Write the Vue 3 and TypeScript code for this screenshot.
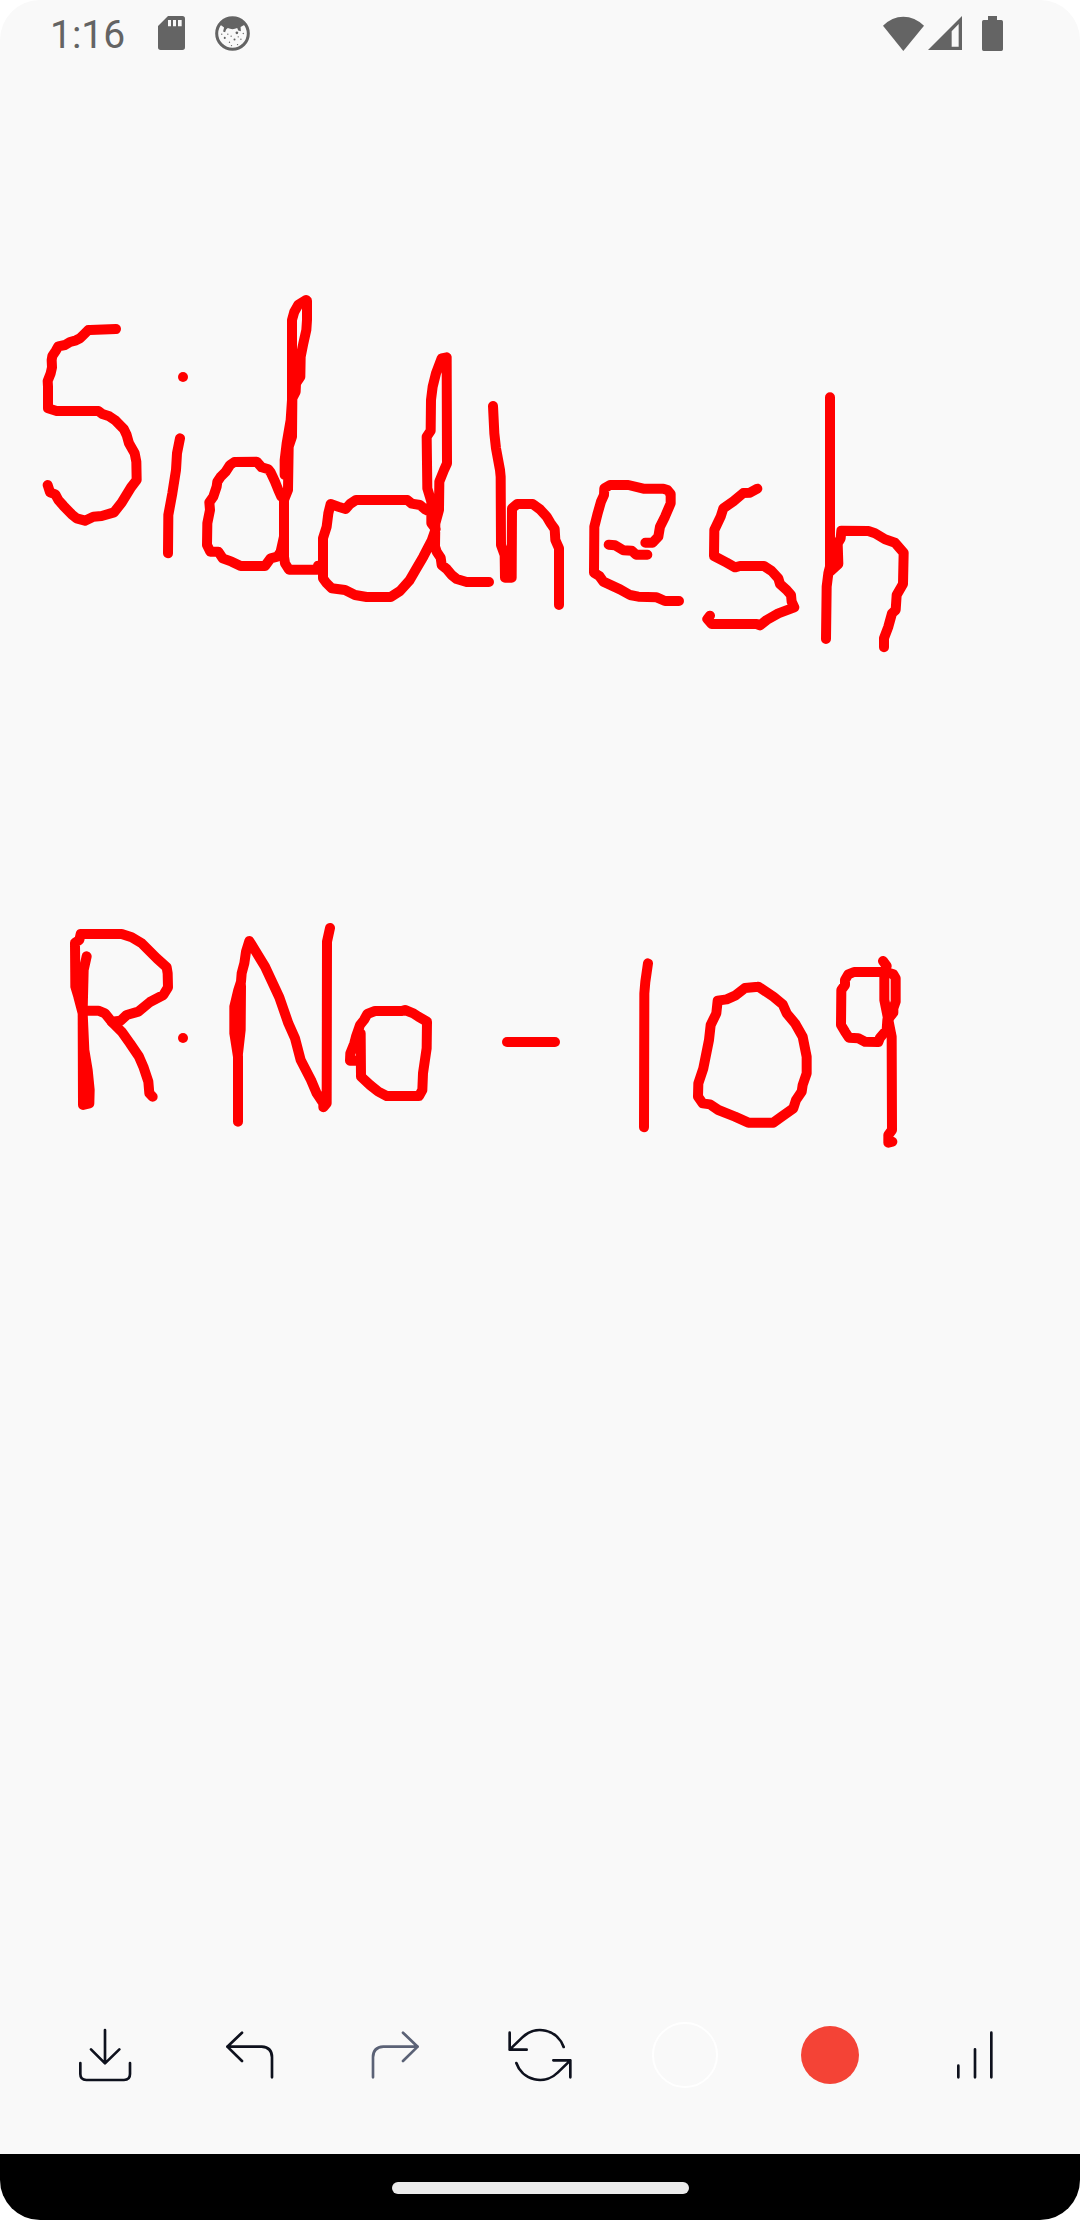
<script setup lang="ts">
import { ref } from 'vue'

interface Patch {
  x: number
  y: number
  strokes: string[]
}

// Stroke points are sampled at three units per pixel, relative to each patch origin.
const patches = ref<Patch[]>([
  {
    x: 30,
    y: 280,
    strokes: [
      '258,147 180,150 175,150 160,165 150,175 138,181 120,186 105,195 85,199 77,213 67,228 65,240 66,262 62,280 53,303 54,320 54,385 80,393 205,393 217,402 238,409 257,422 282,448 290,465 297,490 314,520 319,545 320,600 303,622 275,668 252,697 215,708 190,710 165,722 140,715 125,703 100,677 85,660 76,643 60,637 53,615',
      '459,291 459,291',
      '450,475 441,520 438,570 427,640 415,705 414,820',
      '754,650 745,630 735,605 722,577 715,568 695,562 680,545 613,546 600,555 587,575 572,590 562,605 560,620 550,650 538,667 540,690 532,730 531,795 541,815 565,815 578,835 605,845 632,858 705,858 722,835 742,830 752,815 762,770',
      '764,585 764,540 770,490 782,420 786,360 786,120 793,95 805,74 828,60 831,62 831,120 829,150 820,190 812,230 811,290 798,310 797,335 787,355 786,470 776,500 774,630 762,660 762,830 765,850 777,869 862,869 864,857'
    ]
  },
  {
    x: 300,
    y: 330,
    strokes: [
      '395,548 375,538 360,525 335,521 322,510 168,510 150,522 137,537 115,530 92,522 85,550 80,590 69,625 69,745 80,760 95,775 135,780 165,795 200,801 272,801 300,783 328,752 348,718 370,680 395,632 407,597 394,580 394,515 382,475 380,320 392,302 393,210 398,170 408,130 425,85 440,82 441,400 432,420 418,455 417,540 406,580 405,650 410,665 422,683 425,705 440,717 455,735 470,747 500,756 567,756',
      '579,228 583,310 588,355 600,420 602,440 603,645 614,675 615,743 635,743 636,535 652,522 698,522 720,538 740,560 752,580 764,597 766,630 777,655 777,825'
    ]
  },
  {
    x: 560,
    y: 380,
    strokes: [
      '146,494 165,496 190,511 215,512 228,524 262,524',
      '256,488 278,488 295,470 300,440 315,410 332,370 332,342 322,330 310,326 250,326 205,315 150,315 133,325 132,345 123,365 113,400 103,440 102,578 118,588 130,605 180,628 210,645 235,650 290,652 315,663 357,663',
      '592,326 570,338 550,339 520,364 490,385 482,410 463,450 462,528 500,548 525,562 540,558 612,558 635,573 655,595 660,612 680,630 693,645 695,665 703,682 655,700 620,720 600,736 590,732 455,732 442,717 450,707',
      '810,52 810,560 805,580 800,620 798,777',
      '812,573 835,552 833,490 842,475 844,452 925,453 945,460 975,478 1005,488 1031,518 1029,612 1010,645 1007,690 996,700 985,740 972,775 972,802'
    ]
  },
  {
    x: 50,
    y: 910,
    strokes: [
      '110,139 101,180 98,300 99,585 118,580 119,540 113,480 103,420 98,310 85,260 76,230 75,98 88,90 92,72 215,72 245,82 275,100 320,145 350,172 353,190 354,232 340,255 300,276 265,305 230,315 212,332 185,335 165,310 145,302 112,302',
      '185,335 215,365 240,400 267,440 280,470 295,515 298,550 308,560',
      '399,384 399,384',
      '564,635 564,440 553,370 553,290 565,240 573,215 575,190 583,160 588,125 598,93 645,170 688,262 715,340 735,385 752,450 783,510 800,550 820,580 820,592 830,580 831,95 840,54',
      '564,430 572,360 573,228',
      '932,370 933,500 960,525 985,545 1010,558 1107,558 1117,540 1119,490 1130,415 1131,335 1105,320 1090,310 1065,300 1055,303 975,303 952,312 942,330 930,345 918,380 913,400 901,430 900,452 932,452'
    ]
  },
  {
    x: 480,
    y: 940,
    strokes: [
      '81,306 225,306',
      '504,70 496,125 493,160 492,562',
      '835,140 795,144 765,167 740,178 713,182 709,220 692,255 687,300 670,385 655,430 654,470 668,490 690,493 715,510 765,530 805,548 880,548 905,530 940,505 948,480 965,455 968,435 980,400 980,350 968,290 945,250 920,220 908,193 880,170 835,140',
      '1213,96 1122,96 1105,103 1095,120 1095,135 1084,150 1083,255 1095,275 1107,293 1135,295 1155,305 1195,306 1200,293 1220,270 1222,240 1240,218 1240,205 1247,185 1247,115 1240,103 1225,98',
      '1209,63 1220,78 1213,100 1213,180 1225,240 1235,290 1236,570 1225,585 1225,608 1237,605'
    ]
  }
])
</script>

<template>
  <div class="screen">
    <header class="status">
      <time class="clock">1:16</time>
      <svg class="card" viewBox="0 0 81 102" aria-hidden="true">
        <path fill-rule="evenodd" d="M30 0H73Q81 0 81 8V94Q81 102 73 102H8Q0 102 0 94V30ZM30 12V31H39V12ZM45 12V31H54V12ZM60 12V31H71V12Z" />
      </svg>
      <svg class="face" viewBox="0 0 104 104" aria-hidden="true">
        <circle cx="52" cy="52" r="47" fill="none" stroke="currentColor" stroke-width="9" />
        <path d="M16 26Q52 -14 88 26L76 33L77 45L69 43L66 36Q52 42 38 36L33 40L30 48L24 46L27 34Z" />
        <g>
          <circle cx="65" cy="50" r="4" /><circle cx="29" cy="65" r="3" />
          <circle cx="58" cy="70" r="3" /><circle cx="48" cy="60" r="2" />
          <circle cx="43" cy="78" r="2" /><circle cx="77" cy="69" r="2" />
          <circle cx="38" cy="54" r="2" /><circle cx="67" cy="85" r="2" />
          <circle cx="49" cy="88" r="2" /><circle cx="20" cy="54" r="2" />
          <circle cx="69" cy="62" r="2" /><circle cx="84" cy="52" r="2" />
        </g>
      </svg>
      <span class="spacer"></span>
      <svg class="wifi" viewBox="0 0 123 105" aria-hidden="true">
        <path d="M0 29Q27 2 61 2T123 29L61 105Z" />
      </svg>
      <svg class="signal" viewBox="0 0 102 102" aria-hidden="true">
        <path fill-rule="evenodd" d="M102 0V102H0ZM92 24L71 46V92H92Z" />
      </svg>
      <svg class="battery" viewBox="0 0 63 105" aria-hidden="true">
        <path d="M18 0H45V12H58Q63 12 63 17V100Q63 105 58 105H5Q0 105 0 100V17Q0 12 5 12H18Z" />
      </svg>
    </header>

    <main class="board">
      <svg class="drawing" viewBox="0 66 1080 1890" role="img" aria-label="Siddhesh, R.No - 109">
        <g v-for="(patch, p) in patches" :key="p" :transform="`translate(${patch.x} ${patch.y}) scale(${1 / 3})`">
          <polyline v-for="(points, s) in patch.strokes" :key="s" :points="points" />
        </g>
      </svg>
    </main>

    <nav class="toolbar" aria-label="Drawing tools">
      <button type="button" aria-label="Save">
        <svg viewBox="0 0 198 198"><path d="M99 24V124M57 82L99 124L142 82M25 123V156Q25 174 43 174H156Q174 174 174 156V123" /></svg>
      </button>
      <button type="button" aria-label="Undo">
        <svg viewBox="0 0 198 198"><path d="M75 32L31 74L75 117M31 74H134Q165 76 165 106V166" /></svg>
      </button>
      <button type="button" class="faded" aria-label="Redo">
        <svg viewBox="0 0 198 198"><path d="M123 32L167 74L123 117M167 74H64Q33 76 33 106V166" /></svg>
      </button>
      <button type="button" aria-label="Clear">
        <svg viewBox="0 0 198 198"><path d="M8 32V83H59M8 83L46 46A75 75 0 0 1 170 75M190 166V115H139M190 115L152 152A75 75 0 0 1 28 123" /></svg>
      </button>
      <button type="button" aria-label="Background colour"><span class="ring"></span></button>
      <button type="button" aria-label="Pen colour"><span class="pen"></span></button>
      <button type="button" aria-label="Stroke width">
        <svg viewBox="0 0 198 198"><path d="M49 131V166M99 82V166M148 32V166" /></svg>
      </button>
    </nav>

    <footer class="gestures"><span class="handle"></span></footer>
  </div>
</template>

<style>
body {
  margin: 0;
  background: #fff;
}
</style>

<style scoped>
.screen {
  display: flex;
  flex-direction: column;
  min-height: 100vh;
  overflow: hidden;
  border-radius: 40px;
  background: #f9f9f9;
  font-family: Roboto, sans-serif;
}

.status {
  display: flex;
  align-items: center;
  box-sizing: border-box;
  height: 66px;
  padding: 0 77px 0 50px;
  color: #646464;
}

.status svg {
  display: block;
  fill: currentColor;
}

.clock {
  padding-top: 3px;
  font-size: 39px;
  line-height: 46px;
}

.card {
  width: 27px;
  height: 34px;
  margin-left: 33px;
}

.face {
  width: 35px;
  height: 35px;
  margin-left: 30px;
}

.spacer {
  flex: 1;
}

.wifi {
  width: 41px;
  height: 35px;
}

.signal {
  width: 34px;
  height: 34px;
  margin: 0 20px 0 4px;
}

.battery {
  width: 21px;
  height: 35px;
}

.board {
  flex: 1;
}

.drawing {
  display: block;
  width: 100%;
}

.drawing polyline {
  fill: none;
  stroke: #f00;
  stroke-width: 30;
  stroke-linecap: round;
  stroke-linejoin: round;
}

.toolbar {
  display: flex;
  padding: 66px 32px;
}

.toolbar button {
  display: flex;
  flex: 1;
  align-items: center;
  justify-content: center;
  height: 66px;
  padding: 0;
  border: 0;
  background: none;
  color: #0e111d;
}

.toolbar svg {
  width: 66px;
  height: 66px;
  fill: none;
  stroke: currentColor;
  stroke-width: 8;
  stroke-linecap: round;
  stroke-linejoin: round;
}

.toolbar .faded {
  color: #5b6276;
}

.ring {
  box-sizing: border-box;
  width: 66px;
  height: 66px;
  border: 2px solid #fff;
  border-radius: 50%;
}

.pen {
  width: 58px;
  height: 58px;
  border-radius: 50%;
  background: #f44336;
}

.gestures {
  display: flex;
  align-items: center;
  justify-content: center;
  box-sizing: border-box;
  height: 66px;
  padding-top: 2px;
  background: #000;
}

.handle {
  width: 297px;
  height: 12px;
  border-radius: 6px;
  background: #ebebeb;
}
</style>
